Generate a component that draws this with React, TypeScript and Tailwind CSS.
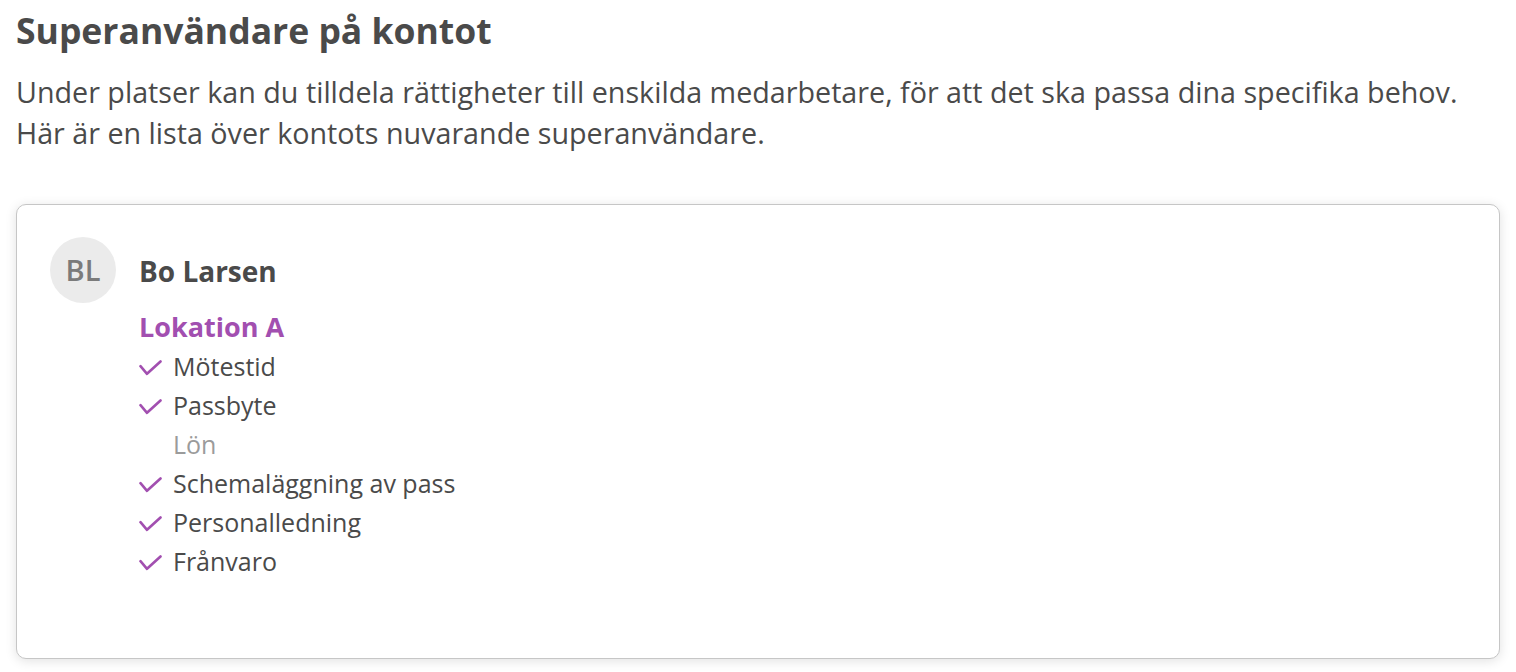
import React from "react";

const Check = () => (
  <svg width="23" height="16" viewBox="0 0 23 16" fill="none" className="shrink-0 mt-[13px]">
    <path d="M1.5 6.2 L8 13.8 L21.5 1.5" stroke="#a24fb0" strokeWidth="2.6" strokeLinecap="round" strokeLinejoin="round" />
  </svg>
);

const items: { label: string; on: boolean }[] = [
  { label: "Mötestid", on: true },
  { label: "Passbyte", on: true },
  { label: "Lön", on: false },
  { label: "Schemaläggning av pass", on: true },
  { label: "Personalledning", on: true },
  { label: "Frånvaro", on: true },
];

export default function App() {
  return (
    <div className="w-[1516px] h-[672px] bg-white overflow-hidden text-[#4a4a4a]" style={{ fontFamily: "'Open Sans', sans-serif" }}>
      <div className="px-[16px] pt-[8px]">
        <h1 className="text-[35.5px] font-bold leading-[44px] m-0">Superanvändare på kontot</h1>
        <p className="mt-[19px] text-[28.7px] leading-[41px]">
          Under platser kan du tilldela rättigheter till enskilda medarbetare, för att det ska passa dina specifika behov.
          <br />
          Här är en lista över kontots nuvarande superanvändare.
        </p>
        <div className="mt-[51px] h-[455px] rounded-[10px] border border-[#c6c6c6] bg-white shadow-[0_2px_12px_rgba(0,0,0,0.12)] pl-[33px] pt-[32px]">
          <div className="flex gap-[23px]">
            <div className="w-[66px] h-[66px] rounded-full bg-[#ebebeb] flex items-center justify-center text-[29px] font-semibold text-[#7b7b7b] shrink-0">
              BL
            </div>
            <div className="pt-[17px]">
              <div className="text-[28px] font-bold leading-[34px]">Bo Larsen</div>
              <div className="mt-[22px] text-[27px] font-bold leading-[34px] text-[#a24fb0]">Lokation A</div>
              <ul className="mt-[3px]">
                {items.map((it) => (
                  <li key={it.label} className="flex items-start h-[39px] text-[25px] leading-[39px]">
                    <span className="w-[34px] flex">{it.on ? <Check /> : null}</span>
                    <span className={it.on ? "text-[#4a4a4a]" : "text-[#9b9b9b]"}>{it.label}</span>
                  </li>
                ))}
              </ul>
            </div>
          </div>
        </div>
      </div>
    </div>
  );
}
